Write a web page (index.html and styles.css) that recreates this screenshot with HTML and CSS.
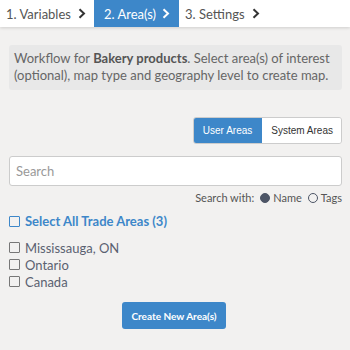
FILE: index.html
```html
<!DOCTYPE html>
<html>
<head>
<meta charset="utf-8">
<link rel="stylesheet" href="styles.css">
</head>
<body>
<nav class="steps">
  <div class="step">1. Variables <span class="chev"><svg width="8" height="11" viewBox="0 0 8 11"><path d="M1.5 1.2 L6 5.5 L1.5 9.8" fill="none" stroke="currentColor" stroke-width="2"/></svg></span></div>
  <div class="step active">2. Area(s) <span class="chev"><svg width="8" height="11" viewBox="0 0 8 11"><path d="M1.5 1.2 L6 5.5 L1.5 9.8" fill="none" stroke="currentColor" stroke-width="2"/></svg></span></div>
  <div class="step">3. Settings <span class="chev"><svg width="8" height="11" viewBox="0 0 8 11"><path d="M1.5 1.2 L6 5.5 L1.5 9.8" fill="none" stroke="currentColor" stroke-width="2"/></svg></span></div>
</nav>
<main class="content">
  <div class="info">Workflow for <b>Bakery products</b>. Select area(s) of interest (optional), map type and geography level to create map.</div>
  <div class="toggle-row">
    <div class="toggle">
      <button class="tbtn on">User Areas</button><button class="tbtn">System Areas</button>
    </div>
  </div>
  <input class="search" type="text" placeholder="Search">
  <div class="search-with">Search with: <span class="radio filled"></span> Name <span class="radio"></span> Tags</div>
  <label class="select-all"><span class="cb blue"></span>Select All Trade Areas (3)</label>
  <ul class="list">
    <li><span class="cb"></span>Mississauga, ON</li>
    <li><span class="cb"></span>Ontario</li>
    <li><span class="cb"></span>Canada</li>
  </ul>
  <div class="create-row"><button class="create">Create New Area(s)</button></div>
</main>
</body>
</html>
```
FILE: styles.css
```css
* { box-sizing: border-box; }
html, body { margin: 0; padding: 0; }
body {
  background: #f2f1f0;
  font-family: Lato, "Noto Sans", sans-serif;
  color: #555;
  width: 350px;
  height: 350px;
  overflow: hidden;
}
.steps {
  display: flex;
  height: 27px;
  background: #fff;
  box-shadow: 0 1px 3px rgba(0,0,0,0.15);
}
.step {
  display: flex;
  align-items: center;
  padding: 0 8px 0 6px;
  font-size: 13px;
  color: #555;
}
.step.active {
  background: #3d87c9;
  color: #fff;
  padding: 0 9px 0 10px;
}
.chev { display: inline-flex; margin-left: 7px; color: #333; }
.active .chev { color: #fff; margin-left: 6px; }
.content { padding: 18px 8px 0 9px; }
.info {
  background: #e8e8e8;
  border-radius: 3px;
  padding: 5px 5px 6px 5px;
  font-size: 13px;
  line-height: 17px;
  color: #666;
}
.info b { color: #555; }
.toggle-row { display: flex; justify-content: flex-end; margin-top: 27px; }
.toggle { display: flex; border-radius: 3px; overflow: hidden; border: 1px solid #ccc; }
.tbtn {
  font-family: "Liberation Sans", Arial, sans-serif;
  font-size: 10px;
  height: 25px;
  border: 0;
  background: #fff;
  color: #333;
  padding: 0 8px 0 9px;
}
.tbtn.on { background: #3d87c9; color: #fff; padding: 0 10px 0 9px; }
.search {
  display: block;
  width: 100%;
  height: 30px;
  margin-top: 12px;
  border: 1px solid #ccc;
  border-radius: 3px;
  background: #fff;
  padding: 0 6px;
  font-family: Lato, sans-serif;
  font-size: 13px;
}
.search::placeholder { color: #999; }
.search-with {
  display: flex; justify-content: flex-end; align-items: center;
  gap: 3px;
  margin-top: 5px;
  font-size: 11px;
  color: #555;
}
.radio {
  width: 10px; height: 10px; border-radius: 50%;
  border: 1px solid #4d5566; display: inline-block; margin-left: 3px;
}
.radio.filled { background: #4d5566; }
.cb {
  width: 11px; height: 11px; border: 1px solid #777;
  border-radius: 1px; display: inline-block; margin-right: 5px; flex: none;
}
.cb.blue { border-color: #3d87c9; }
.select-all {
  display: flex; align-items: center;
  margin-top: 9px;
  font-size: 13px; font-weight: bold; color: #3d87c9;
}
.list { list-style: none; margin: 10px 0 0; padding: 0; }
.list li {
  display: flex; align-items: center; height: 17px;
  font-size: 13px; color: #5a6170;
}
.create-row { display: flex; justify-content: center; margin-top: 12px; padding-right: 3px; }
.create {
  background: #3d87c9; color: #fff; border: 0; border-radius: 3px;
  height: 27px; padding: 0 9px;
  font-family: Lato, sans-serif; font-size: 10px; font-weight: bold;
}
```
